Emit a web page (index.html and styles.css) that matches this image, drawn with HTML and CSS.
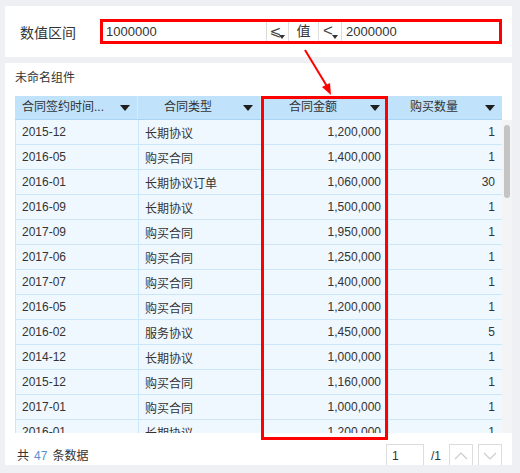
FILE: index.html
```html
<!DOCTYPE html>
<html lang="zh-CN">
<head>
  <meta charset="UTF-8" />
  <title>数值区间过滤</title>
  <link rel="stylesheet" href="styles.css">
</head>
<body>
<div class="page">

  <div class="filter-panel">
    <span class="filter-label">数值区间</span>
    <div class="range-box">
      <div class="range-input">1000000</div>
      <div class="range-op">⩽<i class="op-caret"></i></div>
      <div class="range-val">值</div>
      <div class="range-op range-op-lt">&lt;<i class="op-caret"></i></div>
      <div class="range-input">2000000</div>
    </div>
  </div>

  <!-- annotation arrow -->
  <svg class="mark-arrow" width="40" height="50" viewBox="0 0 40 50">
    <line x1="5" y1="2" x2="28" y2="40" stroke="#f00" stroke-width="2"/>
    <polygon points="31,47 22,39 30,35" fill="#f00"/>
  </svg>

  <div class="widget">
    <div class="widget-title">未命名组件</div>

    <div class="grid-head">
      <div class="hcell hcell-left">合同签约时间...<i class="sort-caret"></i></div>
      <div class="hcell">合同类型<i class="sort-caret"></i></div>
      <div class="hcell">合同金额<i class="sort-caret"></i></div>
      <div class="hcell">购买数量<i class="sort-caret"></i></div>
    </div>

    <div class="grid-scroll">
      <div class="grid-body">
        <table class="grid">
          <colgroup><col class="c1"><col class="c2"><col class="c3"><col class="c4"></colgroup>
          <tr><td>2015-12</td><td>长期协议</td><td class="num">1,200,000</td><td class="num">1</td></tr>
          <tr><td>2016-05</td><td>购买合同</td><td class="num">1,400,000</td><td class="num">1</td></tr>
          <tr><td>2016-01</td><td>长期协议订单</td><td class="num">1,060,000</td><td class="num">30</td></tr>
          <tr><td>2016-09</td><td>长期协议</td><td class="num">1,500,000</td><td class="num">1</td></tr>
          <tr><td>2017-09</td><td>购买合同</td><td class="num">1,950,000</td><td class="num">1</td></tr>
          <tr><td>2017-06</td><td>购买合同</td><td class="num">1,250,000</td><td class="num">1</td></tr>
          <tr><td>2017-07</td><td>购买合同</td><td class="num">1,400,000</td><td class="num">1</td></tr>
          <tr><td>2016-05</td><td>购买合同</td><td class="num">1,200,000</td><td class="num">1</td></tr>
          <tr><td>2016-02</td><td>服务协议</td><td class="num">1,450,000</td><td class="num">5</td></tr>
          <tr><td>2014-12</td><td>长期协议</td><td class="num">1,000,000</td><td class="num">1</td></tr>
          <tr><td>2015-12</td><td>购买合同</td><td class="num">1,160,000</td><td class="num">1</td></tr>
          <tr><td>2017-01</td><td>购买合同</td><td class="num">1,000,000</td><td class="num">1</td></tr>
          <tr><td>2016-01</td><td>长期协议</td><td class="num">1,200,000</td><td class="num">1</td></tr>
          <tr><td>2016-03</td><td>购买合同</td><td class="num">1,300,000</td><td class="num">1</td></tr>
        </table>
      </div>
      <div class="scroll-thumb"></div>
    </div>

    <div class="grid-foot">
      <div class="total"><span>共</span><span class="total-num">47</span><span>条数据</span></div>
      <div class="pager">
        <input class="page-input" type="text" value="1" />
        <span class="page-count">/1</span>
        <button class="page-btn"><svg width="14" height="8" viewBox="0 0 14 8"><polyline points="1,7 7,1 13,7" fill="none" stroke="#ccc" stroke-width="1.2"/></svg></button>
        <button class="page-btn"><svg width="14" height="8" viewBox="0 0 14 8"><polyline points="1,1 7,7 13,1" fill="none" stroke="#ccc" stroke-width="1.2"/></svg></button>
      </div>
    </div>

    <!-- annotation box round the amount column -->
    <div class="mark-column"></div>
  </div>

</div>
</body>
</html>
```

FILE: styles.css
```css
body {
  margin: 0;
  background: #eef0f4;
  font-family: "Liberation Sans", "Noto Sans CJK SC", sans-serif;
  color: #333;
}
.page {
  position: relative;
  padding: 6px 8px 0 5px;
}

/* Filter panel */
.filter-panel {
  background: #fff;
  height: 51px;
  display: flex;
  align-items: center;
  padding-left: 15px;
}
.filter-label {
  width: 80px;
  font-size: 14px;
  color: #333;
}
.range-box {
  display: flex;
  width: 402px;
  height: 25px;
  box-sizing: border-box;
  border: 3px solid #f00;
  font-size: 13px;
  line-height: 19px;
}
.range-input {
  width: 160px;
  padding-left: 3px;
  color: #333;
}
.range-input:last-child {
  flex: 1;
  padding-left: 4px;
}
.range-op,
.range-val {
  position: relative;
  border-left: 1px solid #dcdcdc;
  text-align: center;
  font-size: 14px;
}
.range-op {
  width: 22px;
  padding-right: 4px;
  box-sizing: border-box;
  font-family: "DejaVu Sans", sans-serif;
  color: #444;
}
.range-val { width: 29px; }
.range-op-lt {
  width: 24px;
  border-right: 1px solid #dcdcdc;
  font-family: "Liberation Sans", sans-serif;
  font-size: 17px;
  line-height: 18px;
}
.op-caret {
  position: absolute;
  right: 3px;
  bottom: 2px;
  border-left: 3px solid transparent;
  border-right: 3px solid transparent;
  border-top: 4px solid #333;
}

/* Annotation overlays */
.mark-arrow {
  position: absolute;
  left: 300px;
  top: 48px;
  z-index: 2;
}
.mark-column {
  position: absolute;
  left: 256px;
  top: 33px;
  width: 127px;
  height: 344px;
  box-sizing: border-box;
  border: 3px solid #f00;
}

/* Widget */
.widget {
  position: relative;
  background: #fff;
  margin-top: 6px;
  height: 402px;
  padding-left: 10px;
}
.widget-title {
  height: 33px;
  line-height: 31px;
  font-size: 12px;
  color: #333;
}
.grid-head {
  display: flex;
  width: 487px;
  height: 24px;
  background: #c0e2fb;
  border-bottom: 1px solid #a9d4f3;
  box-sizing: border-box;
  font-size: 12px;
  line-height: 23px;
}
.hcell {
  position: relative;
  box-sizing: border-box;
  padding-right: 22px;
  text-align: center;
  border-right: 1px solid #d6ecfb;
  color: #333;
}
.hcell:nth-child(1) { width: 123px; }
.hcell:nth-child(2) { width: 123px; }
.hcell:nth-child(3) { width: 127px; }
.hcell:nth-child(4) { width: 114px; border-right: none; }
.hcell-left {
  text-align: left;
  padding-left: 7px;
}
.sort-caret {
  position: absolute;
  right: 7px;
  top: 9px;
  border-left: 5px solid transparent;
  border-right: 5px solid transparent;
  border-top: 6px solid #1e1e1e;
}

.grid-scroll {
  position: relative;
  width: 497px;
  height: 313px;
  background: #f3f4f6;
}
.grid-body {
  width: 487px;
  height: 313px;
  overflow: hidden;
}
.scroll-thumb {
  position: absolute;
  right: 2px;
  top: 5px;
  width: 6px;
  height: 73px;
  border-radius: 3px;
  background: #c4c4c4;
}
.grid {
  width: 487px;
  table-layout: fixed;
  border-collapse: collapse;
  background: #f0f8ff;
  font-size: 12px;
  color: #333;
}
.grid col.c1 { width: 123px; }
.grid col.c2 { width: 123px; }
.grid col.c3 { width: 127px; }
.grid col.c4 { width: 114px; }
.grid td {
  height: 24px;
  padding: 0 6px;
  border: 1px solid #cbe6f8;
  border-top: none;
  white-space: nowrap;
  overflow: hidden;
}
.grid td.num {
  text-align: right;
  padding-right: 7px;
}

.grid-foot {
  display: flex;
  justify-content: space-between;
  width: 487px;
  padding-top: 11px;
  height: 21px;
  font-size: 12px;
}
.total {
  display: flex;
  gap: 5px;
  padding-left: 2px;
  line-height: 25px;
}
.total-num {
  color: #5a8fd1;
}
.pager {
  display: flex;
  align-items: center;
  height: 23px;
}
.page-input {
  width: 38px;
  height: 23px;
  box-sizing: border-box;
  border: 1px solid #dcdcdc;
  padding: 0 5px;
  font: 12px "Liberation Sans", sans-serif;
  color: #333;
}
.page-count {
  margin: 0 8px 0 7px;
  color: #333;
}
.page-btn {
  width: 24px;
  height: 23px;
  margin-left: 5px;
  padding: 0;
  border: 1px solid #dcdcdc;
  background: #fff;
  display: flex;
  align-items: center;
  justify-content: center;
}
.page-btn:first-of-type { margin-left: 0; }
```
